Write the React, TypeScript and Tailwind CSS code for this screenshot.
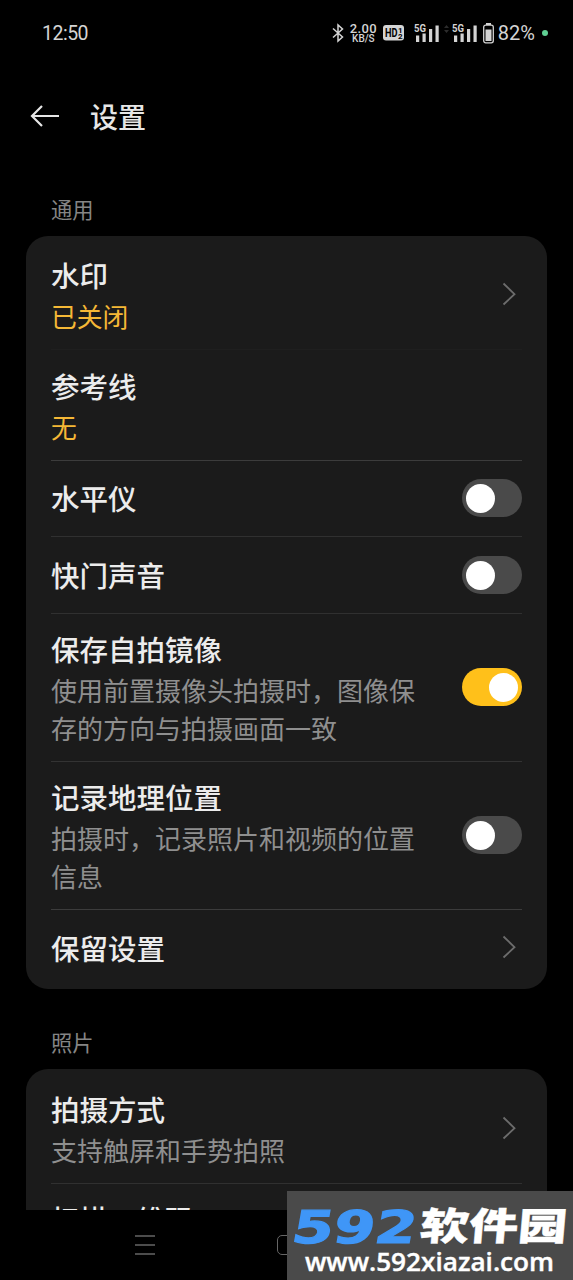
import type { ReactNode } from 'react';

type SettingRow = {
  title: string;
  value?: string;
  hint?: string;
  control: 'arrow' | 'switch' | 'none';
  on?: boolean;
  size: string;
};

const generalRows: SettingRow[] = [
  { title: '水印', value: '已关闭', control: 'arrow', size: 'h-[114px] pt-[19px] border-[#1f1f1f]' },
  { title: '参考线', value: '无', control: 'none', size: 'h-[111px] pt-[16px] border-[#3c3c3c]' },
  { title: '水平仪', control: 'switch', size: 'h-[76px] pt-[17px] border-[#303030]' },
  { title: '快门声音', control: 'switch', size: 'h-[77px] pt-[18px] border-[#303030]' },
  {
    title: '保存自拍镜像',
    hint: '使用前置摄像头拍摄时，图像保存的方向与拍摄画面一致',
    control: 'switch',
    on: true,
    size: 'h-[148px] pt-[15px] border-[#333]',
  },
  {
    title: '记录地理位置',
    hint: '拍摄时，记录照片和视频的位置信息',
    control: 'switch',
    size: 'h-[148px] pt-[15px] border-[#3c3c3c]',
  },
  { title: '保留设置', control: 'arrow', size: 'h-[79px] pt-[18px] border-transparent' },
];

const photoRows: SettingRow[] = [
  { title: '拍摄方式', hint: '支持触屏和手势拍照', control: 'arrow', size: 'h-[115px] pt-[20px] border-[#303030]' },
  { title: '扫描二维码', control: 'switch', size: 'h-[77px] pt-[15px] border-transparent' },
];

function Signal() {
  return (
    <svg width="26" height="20" viewBox="0 0 26 20" fill="#d4d4d4">
      <text x="0" y="9" fontSize="10.5" fontWeight="700" fontFamily="Roboto, sans-serif" textLength="12" lengthAdjust="spacingAndGlyphs">
        5G
      </text>
      <rect x="2" y="12.5" width="3.2" height="6.5" />
      <rect x="8.5" y="10.5" width="3.2" height="8.5" />
      <rect x="15" y="6" width="3.2" height="13" />
      <rect x="21.5" y="2.5" width="3.2" height="16.5" />
    </svg>
  );
}

function StatusBar() {
  return (
    <header className="flex h-[66px] items-center justify-between pl-[42px] pr-[25px] font-['Roboto',sans-serif] text-[#d4d4d4]">
      <span className="pt-[2px] text-[19.5px] tracking-[-0.5px]">12:50</span>
      <div className="flex items-center">
        <svg width="12" height="20" viewBox="0 0 12 20" fill="none" stroke="#d4d4d4" strokeWidth="1.5" className="mr-[6px]">
          <path d="M1 5.5 10.5 14 6 18V2l4.5 4L1 14.5" />
        </svg>
        <div className="mr-[6px] flex w-[27px] flex-col items-center font-medium">
          <span className="text-[13px] leading-[11px] tracking-[0.4px]">2.00</span>
          <span className="text-[10px] leading-[10px]">KB/S</span>
        </div>
        <svg width="21" height="16" viewBox="0 0 21 16" className="mr-[10px]">
          <rect width="21" height="15.5" rx="3" fill="#d4d4d4" />
          <g fill="#000" fontFamily="Roboto, sans-serif" fontWeight="700">
            <text x="2" y="12" fontSize="12" textLength="12.5" lengthAdjust="spacingAndGlyphs">HD</text>
            <text x="15" y="7.5" fontSize="8">1</text>
            <text x="15" y="14" fontSize="8">2</text>
          </g>
        </svg>
        <Signal />
        <svg width="5" height="8" viewBox="0 0 5 8" className="mb-2 ml-[4px] mr-[3px]" fill="#2c2c2c">
          <path d="M2.5 0 5 3H0zM2.5 8 0 5h5z" />
        </svg>
        <Signal />
        <svg width="11" height="21" viewBox="0 0 11 21" className="ml-[5px] mr-[4px]">
          <rect x="3" y="0" width="5" height="2" fill="#d4d4d4" />
          <rect x="0.7" y="2.2" width="9.6" height="17.6" rx="2" fill="none" stroke="#d4d4d4" strokeWidth="1.3" />
          <rect x="2.5" y="6.5" width="6" height="11.5" fill="#d4d4d4" />
        </svg>
        <span className="text-[20px]">82%</span>
        <span className="ml-[7px] h-[6px] w-[6px] rounded-full bg-[#5fcf93]" />
      </div>
    </header>
  );
}

function Switch({ on = false }: { on?: boolean }) {
  return (
    <button
      type="button"
      role="switch"
      aria-checked={on}
      className={`flex h-[38px] w-[60px] items-center rounded-full ${on ? 'justify-end bg-[#ffc01a] pr-[4px]' : 'justify-start bg-[#4a4a4a] pl-[4px]'}`}
    >
      <span className="h-[29px] w-[29px] rounded-full bg-white" />
    </button>
  );
}

function Arrow() {
  return (
    <svg width="14" height="24" viewBox="0 0 14 24" fill="none" stroke="#6c6c6c" strokeWidth="1.8" className="mb-[2px] mr-[6px]">
      <path d="M1.5 1.5 12.5 12.2 1.5 22.5" />
    </svg>
  );
}

function Row({ row }: { row: SettingRow }) {
  return (
    <div className={`flex shrink-0 justify-between border-b ${row.size}`}>
      <div className="w-[370px]">
        <p className="text-[28.5px] font-medium leading-[40px] text-[#ececec]">{row.title}</p>
        {row.value && <p className="mt-[2px] text-[25.8px] leading-[38px] text-[#f5b836]">{row.value}</p>}
        {row.hint && <p className="mt-[2px] text-[26px] leading-[38px] text-[#8f8f8f]">{row.hint}</p>}
      </div>
      <div className={`flex items-center ${row.value || row.hint ? (row.control === 'arrow' ? 'h-[80px]' : 'h-[116px]') : 'h-[40px]'}`}>
        {row.control === 'arrow' && <Arrow />}
        {row.control === 'switch' && <Switch on={row.on} />}
      </div>
    </div>
  );
}

function Group({ label, children }: { label: string; children: ReactNode }) {
  return (
    <section className="mb-[36px]">
      <h2 className="h-[44px] pl-[25px] text-[21.3px] leading-[34px] text-[#858585]">{label}</h2>
      <div className="rounded-[22px] bg-[#1b1b1b] px-[25px]">{children}</div>
    </section>
  );
}

function Watermark() {
  return (
    <div className="absolute bottom-0 right-0 h-[89px] w-[286px] bg-[#4a4a4a]">
      <svg width="286" height="89" viewBox="0 0 286 89">
        <g transform="translate(3 52) skewX(-10)" fill="#3f96f7" stroke="#3f96f7" strokeWidth="1.2">
          <text fontFamily="'DejaVu Sans', sans-serif" fontWeight="700" fontSize="45" textLength="124" lengthAdjust="spacingAndGlyphs">
            592
          </text>
        </g>
        <g transform="translate(132 49) skewX(-5)" fill="#fff" stroke="#fff" strokeWidth="0.4">
          <text fontFamily="'Noto Sans CJK SC', sans-serif" fontWeight="900" fontSize="38" textLength="147" lengthAdjust="spacingAndGlyphs">
            软件园
          </text>
        </g>
        <text x="18" y="79.5" fill="#fff" stroke="#fff" strokeWidth="0.4" fontFamily="'Open Sans', sans-serif" fontWeight="600" fontSize="25.5" textLength="249" lengthAdjust="spacingAndGlyphs">
          www.592xiazai.com
        </text>
      </svg>
    </div>
  );
}

export default function App() {
  return (
    <div className="relative flex h-[1280px] w-[573px] flex-col overflow-hidden bg-black font-['Noto_Sans_CJK_SC',sans-serif]">
      <StatusBar />
      <div className="flex h-[126px] shrink-0 items-start pl-[30px] pt-[30px]">
        <svg width="30" height="22" viewBox="0 0 30 22" fill="none" stroke="#e6e6e6" strokeWidth="2.2" className="mr-[30px] mt-[9px]">
          <path d="M29 11H2M12 1 2 11l10 10" />
        </svg>
        <h1 className="text-[28px] font-medium leading-[40px] text-[#e6e6e6]">设置</h1>
      </div>
      <main className="h-[1018px] shrink-0 overflow-hidden px-[26px]">
        <Group label="通用">
          {generalRows.map((row) => (
            <Row key={row.title} row={row} />
          ))}
        </Group>
        <Group label="照片">
          {photoRows.map((row) => (
            <Row key={row.title} row={row} />
          ))}
        </Group>
      </main>
      <nav className="flex h-[70px] shrink-0 items-center pl-[135px]">
        <svg width="20" height="20" viewBox="0 0 20 20" stroke="#666" strokeWidth="1.5">
          <path d="M0 1h20M0 10h20M0 19h20" />
        </svg>
        <span className="ml-[122px] h-[20px] w-[20px] rounded-[5px] border border-[#666]" />
      </nav>
      <Watermark />
    </div>
  );
}
